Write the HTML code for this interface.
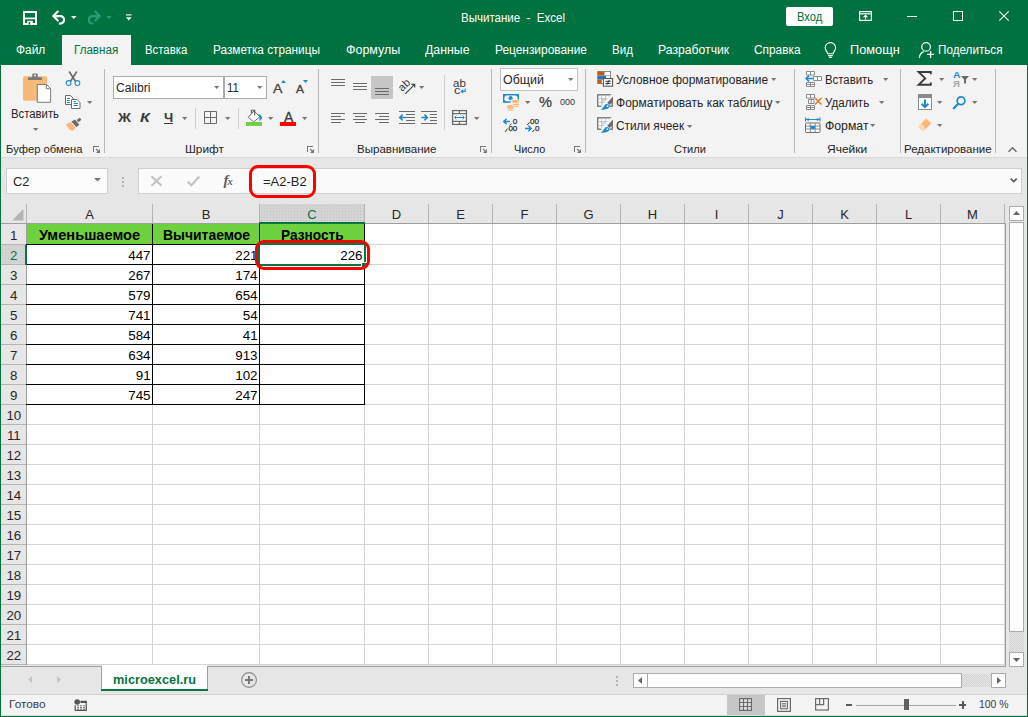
<!DOCTYPE html>
<html><head><meta charset="utf-8"><title>Excel</title>
<style>
*{box-sizing:border-box;margin:0;padding:0}
html,body{width:1028px;height:717px;overflow:hidden;background:#e6e6e6;font-family:"Liberation Sans",sans-serif;font-size:12px;color:#262626}
#win{position:absolute;left:0;top:0;width:1028px;height:717px;overflow:hidden;background:#e6e6e6}
.t{position:absolute;white-space:pre;line-height:1}
svg{position:absolute;overflow:visible}
</style></head><body><div id="win">

<div style="position:absolute;left:0px;top:0px;width:1028px;height:65px;background:#00723f;"></div>
<div style="position:absolute;left:62px;top:35px;width:69px;height:31px;background:#f3f3f3;"></div>
<div style="position:absolute;left:1px;top:65px;width:1026px;height:92px;background:#f3f3f3;"></div>
<div style="position:absolute;left:1px;top:157px;width:1026px;height:1px;background:#dadada;"></div>
<svg style="left:23px;top:11px" width="14" height="14" viewBox="0 0 14 14"><rect x="1" y="1" width="12" height="12" fill="none" stroke="#fff" stroke-width="2"/><path d="M1 7.4H13" stroke="#fff" stroke-width="1.7"/><rect x="4.2" y="9.8" width="5.6" height="3.4" fill="#fff"/><rect x="5.7" y="11" width="1.5" height="2.6" fill="#00723f"/></svg>
<svg style="left:51px;top:10px" width="16" height="15" viewBox="0 0 16 15"><path d="M6.8 1.6L2.2 6.1L6.8 10.6 M2.6 6.1H9.3C14.2 6.1 14.6 13 8.8 13.6" fill="none" stroke="#fff" stroke-width="2.1" stroke-linecap="round" stroke-linejoin="round"/></svg>
<svg style="left:71px;top:16px" width="6" height="4" viewBox="0 0 6 4"><path d="M0 0H5.6L2.8 3Z" fill="#fff"/></svg>
<svg style="left:86px;top:10px" width="16" height="15" viewBox="0 0 16 15"><path d="M9.2 1.6L13.8 6.1L9.2 10.6 M13.4 6.1H6.7C1.8 6.1 1.4 13 6.4 13.6" fill="none" stroke="#2a9b75" stroke-width="2.1" stroke-linecap="round" stroke-linejoin="round"/></svg>
<svg style="left:106px;top:16px" width="6" height="4" viewBox="0 0 6 4"><path d="M0 0H5.6L2.8 3Z" fill="#2a9b75"/></svg>
<svg style="left:126px;top:14px" width="6" height="8" viewBox="0 0 6 8"><path d="M0 0.9H5.6" stroke="#fff" stroke-width="1.1"/><path d="M0 3.2H5.6L2.8 6.4Z" fill="#fff"/></svg>
<div class="t" style="left:461.1px;top:12px;font-size:12px;color:#fff;transform:scaleX(0.9603);transform-origin:0 0;">Вычитание  -  Excel</div>
<div style="position:absolute;left:786px;top:7px;width:47px;height:19px;background:#fdfdfd;border-radius:2px"></div>
<div class="t" style="left:797.1px;top:11px;font-size:12px;color:#00723f;transform:scaleX(0.9320);transform-origin:0 0;">Вход</div>
<svg style="left:859px;top:11px" width="13" height="10" viewBox="0 0 13 10"><rect x="0.6" y="0.6" width="11.8" height="8.8" fill="none" stroke="#fff" stroke-width="1.2"/><path d="M0.6 2.8H12.4" stroke="#fff" stroke-width="1.2"/><path d="M6.5 8.5V4.5 M4.5 6.3L6.5 4.3L8.5 6.3" fill="none" stroke="#fff" stroke-width="1.1"/></svg>
<div style="position:absolute;left:907px;top:16px;width:10px;height:1px;background:#fff;"></div>
<div style="position:absolute;left:953px;top:11px;width:10px;height:10px;border:1px solid #fff"></div>
<svg style="left:999px;top:11px" width="10" height="10" viewBox="0 0 10 10"><path d="M0.3 0.3L9.7 9.7 M9.7 0.3L0.3 9.7" stroke="#fff" stroke-width="1.1"/></svg>
<div class="t" style="left:15.6px;top:44px;font-size:12px;color:#fff;transform:scaleX(0.9898);transform-origin:0 0;">Файл</div>
<div class="t" style="left:73.5px;top:44px;font-size:12px;color:#00723f;transform:scaleX(0.9677);transform-origin:0 0;">Главная</div>
<div class="t" style="left:144.6px;top:44px;font-size:12px;color:#fff;transform:scaleX(0.9461);transform-origin:0 0;">Вставка</div>
<div class="t" style="left:212.9px;top:44px;font-size:12px;color:#fff;transform:scaleX(0.9820);transform-origin:0 0;">Разметка страницы</div>
<div class="t" style="left:345.6px;top:44px;font-size:12px;color:#fff;transform:scaleX(1.0379);transform-origin:0 0;">Формулы</div>
<div class="t" style="left:425.2px;top:44px;font-size:12px;color:#fff;transform:scaleX(1.0264);transform-origin:0 0;">Данные</div>
<div class="t" style="left:494.6px;top:44px;font-size:12px;color:#fff;transform:scaleX(0.9918);transform-origin:0 0;">Рецензирование</div>
<div class="t" style="left:611.8px;top:44px;font-size:12px;color:#fff;transform:scaleX(0.9627);transform-origin:0 0;">Вид</div>
<div class="t" style="left:657.5px;top:44px;font-size:12px;color:#fff;transform:scaleX(1.0174);transform-origin:0 0;">Разработчик</div>
<div class="t" style="left:753.5px;top:44px;font-size:12px;color:#fff;transform:scaleX(0.9878);transform-origin:0 0;">Справка</div>
<div class="t" style="left:849.9px;top:44px;font-size:12px;color:#fff;transform:scaleX(1.0659);transform-origin:0 0;">Помощн</div>
<div class="t" style="left:938.1px;top:44px;font-size:12px;color:#fff;transform:scaleX(0.9734);transform-origin:0 0;">Поделиться</div>
<svg style="left:0;top:0" width="1028" height="717" viewBox="0 0 1028 717"><path d="M827.7 53.7C827.7 51.8 825.2 50.7 825.2 47.8A5.2 5.2 0 0 1 835.6 47.8C835.6 50.7 833.1 51.8 833.1 53.7Z" fill="none" stroke="#fff" stroke-width="1.15"/><path d="M828 55.6H832.8 M829 57.4H831.8" stroke="#fff" stroke-width="1.1"/><circle cx="926.1" cy="46.9" r="4.3" fill="none" stroke="#fff" stroke-width="1.2"/><path d="M919.3 57.9C919.6 54.4 921.4 52.5 923.7 51.6" fill="none" stroke="#fff" stroke-width="1.2"/><path d="M930.6 51V57.9 M927.1 54.45H934.1" stroke="#fff" stroke-width="1.3"/></svg>
<div style="position:absolute;left:0px;top:0px;width:1px;height:717px;background:#00723f;"></div>
<div style="position:absolute;left:1027px;top:0px;width:1px;height:717px;background:#00723f;"></div>
<div style="position:absolute;left:0px;top:716px;width:1028px;height:1px;background:#00723f;"></div>
<div style="position:absolute;left:104px;top:69px;width:1px;height:84px;background:#b9b9b9;"></div>
<div style="position:absolute;left:318px;top:69px;width:1px;height:84px;background:#b9b9b9;"></div>
<div style="position:absolute;left:491px;top:69px;width:1px;height:84px;background:#b9b9b9;"></div>
<div style="position:absolute;left:585px;top:69px;width:1px;height:84px;background:#b9b9b9;"></div>
<div style="position:absolute;left:794px;top:69px;width:1px;height:84px;background:#b9b9b9;"></div>
<div style="position:absolute;left:900px;top:69px;width:1px;height:84px;background:#b9b9b9;"></div>
<div style="position:absolute;left:995px;top:69px;width:1px;height:84px;background:#b9b9b9;"></div>
<div class="t" style="left:6.0px;top:144px;font-size:11.5px;color:#262626;transform:scaleX(0.9777);transform-origin:0 0;">Буфер обмена</div>
<div class="t" style="left:184.6px;top:144px;font-size:11.5px;color:#262626;transform:scaleX(1.0281);transform-origin:0 0;">Шрифт</div>
<div class="t" style="left:357.2px;top:144px;font-size:11.5px;color:#262626;transform:scaleX(1.0043);transform-origin:0 0;">Выравнивание</div>
<div class="t" style="left:514.3px;top:144px;font-size:11.5px;color:#262626;transform:scaleX(0.9464);transform-origin:0 0;">Число</div>
<div class="t" style="left:674.0px;top:144px;font-size:11.5px;color:#262626;transform:scaleX(0.9629);transform-origin:0 0;">Стили</div>
<div class="t" style="left:826.5px;top:144px;font-size:11.5px;color:#262626;transform:scaleX(1.0448);transform-origin:0 0;">Ячейки</div>
<div class="t" style="left:904.1px;top:144px;font-size:11.5px;color:#262626;transform:scaleX(1.0011);transform-origin:0 0;">Редактирование</div>
<svg style="left:93px;top:146px" width="7" height="7" viewBox="0 0 7 7"><path d="M0 0H6V1H1V6H0Z" fill="#777"/><path d="M7 3V7H3Z" fill="#777"/><path d="M3 3L5.5 5.5" stroke="#777" stroke-width="1.1"/></svg>
<svg style="left:307px;top:146px" width="7" height="7" viewBox="0 0 7 7"><path d="M0 0H6V1H1V6H0Z" fill="#777"/><path d="M7 3V7H3Z" fill="#777"/><path d="M3 3L5.5 5.5" stroke="#777" stroke-width="1.1"/></svg>
<svg style="left:480px;top:146px" width="7" height="7" viewBox="0 0 7 7"><path d="M0 0H6V1H1V6H0Z" fill="#777"/><path d="M7 3V7H3Z" fill="#777"/><path d="M3 3L5.5 5.5" stroke="#777" stroke-width="1.1"/></svg>
<svg style="left:574px;top:146px" width="7" height="7" viewBox="0 0 7 7"><path d="M0 0H6V1H1V6H0Z" fill="#777"/><path d="M7 3V7H3Z" fill="#777"/><path d="M3 3L5.5 5.5" stroke="#777" stroke-width="1.1"/></svg>
<svg style="left:1008px;top:147px" width="9" height="5" viewBox="0 0 9 5"><path d="M0.5 4.8L4.5 0.8L8.5 4.8" fill="none" stroke="#6b6b6b" stroke-width="1.5"/></svg>
<svg style="left:23px;top:73px" width="29" height="30" viewBox="0 0 29 30"><rect x="0" y="3.3" width="24" height="24.5" rx="1.5" fill="#f8b878"/>
<path d="M5 7V4.2H9.2V1.8A1.2 1.2 0 0 1 10.4 0.6H13.6A1.2 1.2 0 0 1 14.8 1.8V4.2H19V7Z" fill="#7a7a7a"/><circle cx="12" cy="2.6" r="1" fill="#f3f3f3"/>
<path d="M14.3 11.5H23.5L27.6 15.6V29.3H14.3Z" fill="#fff" stroke="#7a7a7a" stroke-width="1"/><path d="M23.3 11.7V15.8H27.4" fill="none" stroke="#7a7a7a" stroke-width="1"/></svg>
<div class="t" style="left:11.0px;top:108px;font-size:12px;color:#262626;transform:scaleX(0.9436);transform-origin:0 0;">Вставить</div>
<svg style="left:33px;top:128.3px" width="6" height="3" viewBox="0 0 6 3"><path d="M0 0H5.4L2.7 3Z" fill="#777"/></svg>
<svg style="left:65px;top:71px" width="16" height="15" viewBox="0 0 16 15"><path d="M4.2 0.5L10.6 10.5 M11.8 0.5L5.4 10.5" stroke="#6b6b6b" stroke-width="1.6" fill="none"/>
<circle cx="3.6" cy="12" r="2.4" fill="none" stroke="#1e8bcd" stroke-width="1.05"/><circle cx="12.4" cy="12" r="2.4" fill="none" stroke="#1e8bcd" stroke-width="1.05"/></svg>
<svg style="left:65px;top:95px" width="16" height="14" viewBox="0 0 16 14"><path d="M0.5 0.5H5.5L8 3V9.5H0.5Z" fill="#fff" stroke="#6b6b6b"/><path d="M2 3.5H5 M2 5.5H5 M2 7.5H5" stroke="#1e8bcd" stroke-width="1"/>
<path d="M6.5 4.5H12L15 7.5V13.5H6.5Z" fill="#fff" stroke="#6b6b6b"/><path d="M8.5 8.5H13 M8.5 10.5H13" stroke="#1e8bcd" stroke-width="1"/><path d="M8.5 6.5H11" stroke="#1e8bcd" stroke-width="1"/></svg>
<svg style="left:87px;top:101.2px" width="6" height="3" viewBox="0 0 6 3"><path d="M0 0H5.4L2.7 3Z" fill="#777"/></svg>
<svg style="left:0;top:0" width="1028" height="717" viewBox="0 0 1028 717"><path d="M65.8 124.5L70.8 122L75.6 128L72.8 131L69.4 129.8Z" fill="#f8b878"/><path d="M71.4 121.6L75 119.6L79.3 124.8L76.4 127.2Z" fill="#6b6b6b"/><path d="M76.6 120L79.8 117.8L81.4 119.8L78.4 122.3Z" fill="#6b6b6b"/></svg>
<div style="position:absolute;left:113px;top:76px;width:111px;height:23px;background:#fff;border:1px solid #ababab"></div>
<div style="position:absolute;left:224px;top:76px;width:43px;height:23px;background:#fff;border:1px solid #ababab"></div>
<div class="t" style="left:116.2px;top:82px;font-size:12px;color:#262626;transform:scaleX(1.0115);transform-origin:0 0;">Calibri</div>
<div class="t" style="left:227.2px;top:82px;font-size:12px;color:#262626;transform:scaleX(0.9472);transform-origin:0 0;">11</div>
<svg style="left:214px;top:86.2px" width="6" height="3" viewBox="0 0 6 3"><path d="M0 0H5.4L2.7 3Z" fill="#777"/></svg>
<svg style="left:257px;top:86.2px" width="6" height="3" viewBox="0 0 6 3"><path d="M0 0H5.4L2.7 3Z" fill="#777"/></svg>
<div class="t" style="left:273.2px;top:82px;font-size:13.4px;color:#444;transform:scaleX(1.0517);transform-origin:0 0;-webkit-text-stroke:0.3px #444;">A</div>
<div class="t" style="left:296.1px;top:85px;font-size:10px;color:#444;transform:scaleX(1.1844);transform-origin:0 0;-webkit-text-stroke:0.3px #444;">A</div>
<svg style="left:281px;top:80px" width="5" height="3" viewBox="0 0 5 3"><path d="M0 3H5L2.5 0Z" fill="#1e8bcd"/></svg>
<svg style="left:303px;top:80px" width="5" height="3" viewBox="0 0 5 3"><path d="M0 0H5L2.5 3Z" fill="#1e8bcd"/></svg>
<div class="t" style="left:117.5px;top:112px;font-size:12px;color:#3a3a3a;font-weight:bold;transform:scaleX(1.1894);transform-origin:0 0;">Ж</div>
<div class="t" style="left:140.4px;top:112px;font-size:12px;color:#3a3a3a;font-weight:bold;font-style:italic;transform:scaleX(1.3420);transform-origin:0 0;">К</div>
<div class="t" style="left:163.6px;top:112px;font-size:12px;color:#3a3a3a;font-weight:bold;transform:scaleX(1.0911);transform-origin:0 0;">Ч</div>
<div style="position:absolute;left:163.5px;top:122.6px;width:9.5px;height:1px;background:#3a3a3a;"></div>
<svg style="left:182px;top:117.1px" width="6" height="3" viewBox="0 0 6 3"><path d="M0 0H5.4L2.7 3Z" fill="#777"/></svg>
<div style="position:absolute;left:195px;top:108px;width:1px;height:21px;background:#d0d0d0;"></div>
<svg style="left:204px;top:111px" width="13" height="13" viewBox="0 0 13 13"><path d="M0.5 0.5H12.5V12.5H0.5Z M6.5 0.5V12.5 M0.5 6.5H12.5" fill="none" stroke="#6b6b6b" stroke-width="1"/></svg>
<svg style="left:225px;top:117.1px" width="6" height="3" viewBox="0 0 6 3"><path d="M0 0H5.4L2.7 3Z" fill="#777"/></svg>
<div style="position:absolute;left:238px;top:108px;width:1px;height:21px;background:#d0d0d0;"></div>
<svg style="left:0;top:0" width="1028" height="717" viewBox="0 0 1028 717"><path d="M254 110.9L259.9 116.8L253.7 121.8L248.2 117.3Z" fill="#fff" stroke="#6b6b6b" stroke-width="1"/><path d="M251.4 113.6V110.3H254.7V115.6" fill="none" stroke="#5a5a5a" stroke-width="1.1"/><path d="M258.4 113.9C260.6 114.2 262.4 116 261.9 118C261.5 119.4 260.6 120.4 259.4 121L259.6 117.6Z" fill="#1e8bcd"/><rect x="246" y="122" width="16" height="3.9" fill="#6dcf43"/></svg>
<svg style="left:268px;top:117.1px" width="6" height="3" viewBox="0 0 6 3"><path d="M0 0H5.4L2.7 3Z" fill="#777"/></svg>
<div class="t" style="left:283.6px;top:110px;font-size:14px;color:#3b3b3b;transform:scaleX(0.9959);transform-origin:0 0;-webkit-text-stroke:0.3px #3b3b3b;">A</div>
<div style="position:absolute;left:280px;top:122px;width:16px;height:3.9px;background:#fe0000;"></div>
<svg style="left:302px;top:117.1px" width="6" height="3" viewBox="0 0 6 3"><path d="M0 0H5.4L2.7 3Z" fill="#777"/></svg>
<div style="position:absolute;left:331px;top:79px;width:14px;height:1px;background:#6b6b6b;"></div>
<div style="position:absolute;left:331px;top:82px;width:14px;height:1px;background:#6b6b6b;"></div>
<div style="position:absolute;left:331px;top:85px;width:14px;height:1px;background:#6b6b6b;"></div>
<div style="position:absolute;left:353px;top:83px;width:14px;height:1px;background:#6b6b6b;"></div>
<div style="position:absolute;left:353px;top:86px;width:14px;height:1px;background:#6b6b6b;"></div>
<div style="position:absolute;left:353px;top:89px;width:14px;height:1px;background:#6b6b6b;"></div>
<div style="position:absolute;left:371px;top:76px;width:22px;height:23px;background:#c6c6c6;"></div>
<div style="position:absolute;left:375px;top:88px;width:14px;height:1px;background:#6b6b6b;"></div>
<div style="position:absolute;left:375px;top:91px;width:14px;height:1px;background:#6b6b6b;"></div>
<div style="position:absolute;left:375px;top:94px;width:14px;height:1px;background:#6b6b6b;"></div>
<svg style="left:398px;top:79px" width="18" height="16" viewBox="0 0 18 16"><text x="0" y="0" font-family="Liberation Sans" font-size="11" fill="#3a3a3a" transform="translate(4.3,12.9) rotate(-45)">ab</text><path d="M7.2 14.8L16.2 5.8 M13.4 5.3H16.7V8.6" fill="none" stroke="#444" stroke-width="1.2"/></svg>
<svg style="left:419px;top:85.8px" width="6" height="3" viewBox="0 0 6 3"><path d="M0 0H5.4L2.7 3Z" fill="#777"/></svg>
<div style="position:absolute;left:444px;top:75px;width:1px;height:55px;background:#d0d0d0;"></div>
<div style="position:absolute;left:331px;top:113px;width:14px;height:1px;background:#6b6b6b;"></div>
<div style="position:absolute;left:331px;top:116px;width:10px;height:1px;background:#6b6b6b;"></div>
<div style="position:absolute;left:331px;top:119px;width:14px;height:1px;background:#6b6b6b;"></div>
<div style="position:absolute;left:331px;top:122px;width:10px;height:1px;background:#6b6b6b;"></div>
<div style="position:absolute;left:353px;top:113px;width:14px;height:1px;background:#6b6b6b;"></div>
<div style="position:absolute;left:355px;top:116px;width:10px;height:1px;background:#6b6b6b;"></div>
<div style="position:absolute;left:353px;top:119px;width:14px;height:1px;background:#6b6b6b;"></div>
<div style="position:absolute;left:355px;top:122px;width:10px;height:1px;background:#6b6b6b;"></div>
<div style="position:absolute;left:375px;top:113px;width:14px;height:1px;background:#6b6b6b;"></div>
<div style="position:absolute;left:379px;top:116px;width:10px;height:1px;background:#6b6b6b;"></div>
<div style="position:absolute;left:375px;top:119px;width:14px;height:1px;background:#6b6b6b;"></div>
<div style="position:absolute;left:379px;top:122px;width:10px;height:1px;background:#6b6b6b;"></div>
<div style="position:absolute;left:399px;top:111px;width:16px;height:1px;background:#6b6b6b;"></div>
<div style="position:absolute;left:406px;top:114px;width:9px;height:1px;background:#6b6b6b;"></div>
<div style="position:absolute;left:406px;top:117px;width:9px;height:1px;background:#6b6b6b;"></div>
<div style="position:absolute;left:406px;top:120px;width:9px;height:1px;background:#6b6b6b;"></div>
<div style="position:absolute;left:399px;top:123px;width:16px;height:1px;background:#6b6b6b;"></div>
<svg style="left:399px;top:114px" width="7" height="7" viewBox="0 0 7 7"><path d="M6.8 3.5H1 M3.6 0.6L0.7 3.5L3.6 6.4" fill="none" stroke="#1e8bcd" stroke-width="1.5"/></svg>
<div style="position:absolute;left:421px;top:111px;width:16px;height:1px;background:#6b6b6b;"></div>
<div style="position:absolute;left:430px;top:114px;width:7px;height:1px;background:#6b6b6b;"></div>
<div style="position:absolute;left:430px;top:117px;width:7px;height:1px;background:#6b6b6b;"></div>
<div style="position:absolute;left:430px;top:120px;width:7px;height:1px;background:#6b6b6b;"></div>
<div style="position:absolute;left:421px;top:123px;width:16px;height:1px;background:#6b6b6b;"></div>
<svg style="left:421px;top:114px" width="7" height="7" viewBox="0 0 7 7"><path d="M0.2 3.5H6 M3.4 0.6L6.3 3.5L3.4 6.4" fill="none" stroke="#1e8bcd" stroke-width="1.5"/></svg>
<div class="t" style="left:453.4px;top:78px;font-size:11px;color:#3a3a3a;transform:scaleX(1.0461);transform-origin:0 0;">ab</div>
<div class="t" style="left:453.8px;top:85px;font-size:11.5px;color:#3a3a3a;transform:scaleX(1.1304);transform-origin:0 0;">c</div>
<svg style="left:0;top:0" width="1028" height="717" viewBox="0 0 1028 717"><path d="M465.2 88.6V91.4H461.6 M463.2 89.6L461.3 91.4L463.2 93.2" fill="none" stroke="#1e8bcd" stroke-width="1.1"/><rect x="452.6" y="110.6" width="13.8" height="13.8" fill="#fff" stroke="#6b6b6b" stroke-width="1.3"/><path d="M452.6 113.6H466.4 M452.6 121.4H466.4 M459.5 110.6V113.6 M459.5 121.4V124.4" stroke="#6b6b6b" stroke-width="1.2" fill="none"/><path d="M454.8 117.5H464.2 M456.4 115.8L454.6 117.5L456.4 119.2 M462.6 115.8L464.4 117.5L462.6 119.2" fill="none" stroke="#1e8bcd" stroke-width="1"/></svg>
<svg style="left:474px;top:117px" width="6" height="3" viewBox="0 0 6 3"><path d="M0 0H5.4L2.7 3Z" fill="#777"/></svg>
<div style="position:absolute;left:500px;top:68px;width:78px;height:23px;background:#fff;border:1px solid #c2c2c2"></div>
<div class="t" style="left:503.1px;top:74px;font-size:12px;color:#262626;transform:scaleX(1.0358);transform-origin:0 0;">Общий</div>
<svg style="left:567.6px;top:78px" width="6" height="3" viewBox="0 0 6 3"><path d="M0 0H5.4L2.7 3Z" fill="#777"/></svg>
<svg style="left:0;top:0" width="1028" height="717" viewBox="0 0 1028 717"><rect x="503" y="94" width="16" height="8.8" fill="#1e8bcd"/><path d="M506 95.6H516L517.6 97V99.8L516 101.2H506L504.4 99.8V97Z" fill="#fff"/><circle cx="510.6" cy="98.2" r="2.1" fill="#1e8bcd"/>
<rect x="510.6" y="99.6" width="9.4" height="8" fill="#f3f3f3"/><rect x="506" y="104.4" width="9" height="6.4" fill="#f3f3f3"/>
<ellipse cx="515.5" cy="101.5" rx="3.8" ry="1.4" fill="#f8b878"/><path d="M513 104.4H519 M514.6 106.4H518.6" stroke="#f8b878" stroke-width="1.1"/>
<ellipse cx="510.4" cy="106.4" rx="3.6" ry="1.5" fill="#f8b878"/><path d="M507.4 108.7H513.6 M508 110.1H513" stroke="#f8b878" stroke-width="1"/></svg>
<svg style="left:525px;top:101px" width="6" height="3" viewBox="0 0 6 3"><path d="M0 0H5.4L2.7 3Z" fill="#777"/></svg>
<div class="t" style="left:539.1px;top:95px;font-size:14px;color:#3a3a3a;transform:scaleX(1.0443);transform-origin:0 0;-webkit-text-stroke:0.2px #3a3a3a;">%</div>
<div class="t" style="left:559.6px;top:98px;font-size:10px;color:#333;transform:scale(0.905,0.875);transform-origin:0 0">000</div>
<svg style="left:0;top:0" width="1028" height="717" viewBox="0 0 1028 717"><path d="M509.9 121.4H504 M506.6 118.7L503.8 121.4L506.6 124.1" fill="none" stroke="#1e8bcd" stroke-width="1.5"/>
<text x="512.7" y="123.8" font-family="Liberation Sans" font-size="8" fill="#2b2b2b" stroke="#2b2b2b" stroke-width="0.25">0</text><text x="508.4" y="131.2" font-family="Liberation Sans" font-size="8" fill="#2b2b2b" stroke="#2b2b2b" stroke-width="0.25">00</text><path d="M505.2 131.8L507.6 128.6" stroke="#2b2b2b" stroke-width="1"/><path d="M509.6 125.6L511.4 123.6" stroke="#2b2b2b" stroke-width="0.9"/>
<text x="530" y="123.8" font-family="Liberation Sans" font-size="8" fill="#2b2b2b" stroke="#2b2b2b" stroke-width="0.25">00</text><path d="M527.3 125L529.6 122.3" stroke="#2b2b2b" stroke-width="1"/>
<path d="M525 128.5H531 M528.4 125.8L531.2 128.5L528.4 131.2" fill="none" stroke="#1e8bcd" stroke-width="1.5"/>
<text x="535" y="131.2" font-family="Liberation Sans" font-size="8" fill="#2b2b2b" stroke="#2b2b2b" stroke-width="0.25">0</text><path d="M532.4 132L534.5 129.6" stroke="#2b2b2b" stroke-width="1"/></svg>
<svg style="left:0;top:0" width="1028" height="717" viewBox="0 0 1028 717"><rect x="597.7" y="71.5" width="12.8" height="12" fill="#fff" stroke="#8a8a8a"/><path d="M597.7 75.6H610.5 M597.7 79.6H610.5 M604.2 71.5V83.5" stroke="#b0b0b0" fill="none"/>
<rect x="597.7" y="71.5" width="6.4" height="3.8" fill="#c55a11"/><rect x="597.7" y="75.8" width="8.4" height="3.6" fill="#2e75b6"/><rect x="597.7" y="79.9" width="4" height="3.6" fill="#c55a11"/>
<rect x="603.4" y="78.5" width="9.2" height="7.7" fill="#fff" stroke="#5a5a5a" stroke-width="1.1"/><path d="M605.4 81.3H610.6 M605.4 83.4H610.6 M609.4 80L606.8 84.8" stroke="#222" stroke-width="0.9" fill="none"/></svg>
<div class="t" style="left:616.2px;top:74px;font-size:12px;color:#262626;transform:scaleX(0.9970);transform-origin:0 0;">Условное форматирование</div>
<svg style="left:771px;top:78px" width="6" height="3" viewBox="0 0 6 3"><path d="M0 0H5.4L2.7 3Z" fill="#777"/></svg>
<svg style="left:0;top:0" width="1028" height="717" viewBox="0 0 1028 717"><rect x="597.75" y="94.85000000000001" width="14.5" height="11.3" fill="#fff" stroke="#6b6b6b" stroke-width="1.3"/>
<rect x="601.6" y="98.60000000000001" width="7.6" height="7" fill="#d6d6d6"/>
<path d="M601.6 95.2V105.8 M605.4 95.2V105.8 M609.2 95.2V105.8 M598 98.60000000000001H612 M598 102.5H612" stroke="#c2c2c2" stroke-width="1" fill="none"/>
<path d="M614 95.4L602.6 107.60000000000001" stroke="#f3f3f3" stroke-width="5.2"/>
<path d="M613 96.60000000000001V101.8L609.7 105.10000000000001L607.3 102.8Z" fill="#6b6b6b"/>
<path d="M601 109.9L605.3 104.4C606.6 103.4 609.1 104.0 609.4 106.10000000000001C609.5 108.4 607 109.7 601 109.9Z" fill="#1e8bcd"/><circle cx="607.4" cy="106.2" r="0.9" fill="#fff"/></svg>
<div class="t" style="left:616.2px;top:97px;font-size:12px;color:#262626;transform:scaleX(1.0024);transform-origin:0 0;">Форматировать как таблицу</div>
<svg style="left:775px;top:101px" width="6" height="3" viewBox="0 0 6 3"><path d="M0 0H5.4L2.7 3Z" fill="#777"/></svg>
<svg style="left:0;top:0" width="1028" height="717" viewBox="0 0 1028 717"><rect x="597.75" y="117.85000000000001" width="14.5" height="11.3" fill="#fff" stroke="#6b6b6b" stroke-width="1.3"/>
<rect x="601.6" y="121.60000000000001" width="7.6" height="7" fill="#cfe6f0"/>
<path d="M601.6 118.2V128.8 M605.4 118.2V128.8 M609.2 118.2V128.8 M598 121.60000000000001H612 M598 125.5H612" stroke="#c2c2c2" stroke-width="1" fill="none"/>
<path d="M614 118.4L602.6 130.6" stroke="#f3f3f3" stroke-width="5.2"/>
<path d="M613 119.60000000000001V124.8L609.7 128.1L607.3 125.8Z" fill="#6b6b6b"/>
<path d="M601 132.9L605.3 127.4C606.6 126.4 609.1 127.0 609.4 129.1C609.5 131.4 607 132.7 601 132.9Z" fill="#1e8bcd"/><circle cx="607.4" cy="129.2" r="0.9" fill="#fff"/></svg>
<div class="t" style="left:616.2px;top:120px;font-size:12px;color:#262626;transform:scaleX(0.9833);transform-origin:0 0;">Стили ячеек</div>
<svg style="left:686.7px;top:124.6px" width="6" height="3" viewBox="0 0 6 3"><path d="M0 0H5.4L2.7 3Z" fill="#777"/></svg>
<svg style="left:805px;top:71px" width="17" height="16" viewBox="0 0 17 16"><path d="M1.5 0.5H9.5V4H1.5Z M5.5 0.5V4 M1.5 11.5H9.5V15.5H1.5Z M5.5 11.5V15.5 M1.5 13.5H9.5" fill="#fff" stroke="#8a8a8a"/><path d="M8.5 5.5H16.5V9.5H8.5Z M12.5 5.5V9.5" fill="#fff" stroke="#8a8a8a"/>
<path d="M8 7.5H1.2 M4 4.6L1 7.5L4 10.4" fill="none" stroke="#1e8bcd" stroke-width="1.5"/></svg>
<div class="t" style="left:824.9px;top:74px;font-size:12px;color:#262626;transform:scaleX(0.9476);transform-origin:0 0;">Вставить</div>
<svg style="left:882.6px;top:78px" width="6" height="3" viewBox="0 0 6 3"><path d="M0 0H5.4L2.7 3Z" fill="#777"/></svg>
<svg style="left:805px;top:93.5px" width="18" height="16" viewBox="0 0 18 16"><path d="M1.5 0.5H9.5V4H1.5Z M5.5 0.5V4 M1.5 11.5H9.5V15.5H1.5Z M5.5 11.5V15.5 M1.5 13.5H9.5" fill="#fff" stroke="#8a8a8a"/><path d="M3.5 5.5H9V9.5H3.5Z M6.2 5.5V9.5" fill="#fff" stroke="#8a8a8a"/>
<path d="M10 4L16.5 10.5 M16.5 4L10 10.5" fill="none" stroke="#e8761e" stroke-width="1.5"/></svg>
<div class="t" style="left:824.9px;top:97px;font-size:12px;color:#262626;transform:scaleX(0.9647);transform-origin:0 0;">Удалить</div>
<svg style="left:878.7px;top:100.6px" width="6" height="3" viewBox="0 0 6 3"><path d="M0 0H5.4L2.7 3Z" fill="#777"/></svg>
<svg style="left:805px;top:117px" width="16" height="16" viewBox="0 0 16 16"><path d="M0.5 2.5H15 M0.5 0.3V4.7 M15 0.3V4.7" stroke="#1e8bcd" stroke-width="1" fill="none"/><path d="M3.6 0.8L1.2 2.5L3.6 4.2Z M11.9 0.8L14.3 2.5L11.9 4.2Z" fill="#1e8bcd"/>
<rect x="0.5" y="6" width="14.5" height="9.5" rx="1" fill="#fff" stroke="#6b6b6b"/><path d="M0.5 9H15 M0.5 12H15 M5.3 6V15.5 M10.2 6V15.5" stroke="#8a8a8a" fill="none"/><rect x="5.3" y="9" width="4.9" height="3" fill="#1e8bcd"/></svg>
<div class="t" style="left:824.9px;top:120px;font-size:12px;color:#262626;transform:scaleX(1.0205);transform-origin:0 0;">Формат</div>
<svg style="left:870.3px;top:123.7px" width="6" height="3" viewBox="0 0 6 3"><path d="M0 0H5.4L2.7 3Z" fill="#777"/></svg>
<svg style="left:917px;top:70.5px" width="15" height="15" viewBox="0 0 15 15"><path d="M13.8 3.3V1H1.6L8.2 7.4L1.6 13.8H13.8V11.4" fill="none" stroke="#3b3b3b" stroke-width="1.9" stroke-linejoin="miter"/></svg>
<svg style="left:938.6px;top:78px" width="6" height="3" viewBox="0 0 6 3"><path d="M0 0H5.4L2.7 3Z" fill="#777"/></svg>
<div class="t" style="left:952.5px;top:70px;font-size:9.5px;color:#1e8bcd;font-weight:bold;transform:scaleX(1.0932);transform-origin:0 0;">А</div>
<div class="t" style="left:952.9px;top:79px;font-size:9.5px;color:#a6a6a6;font-weight:bold;transform:scaleX(1.0105);transform-origin:0 0;">Я</div>
<svg style="left:960.6px;top:75.8px" width="8" height="8" viewBox="0 0 8 8"><path d="M0 0H8L5 3.4V7.5H3V3.4Z" fill="#6b6b6b"/></svg>
<svg style="left:971.7px;top:78px" width="6" height="3" viewBox="0 0 6 3"><path d="M0 0H5.4L2.7 3Z" fill="#777"/></svg>
<svg style="left:918px;top:94px" width="14" height="16" viewBox="0 0 14 16"><rect x="0.5" y="0.5" width="13" height="15" fill="#fff" stroke="#8a8a8a"/><rect x="0.5" y="0.5" width="13" height="3.5" fill="#8a8a8a"/>
<path d="M7 5.6V13 M3.6 9.8L7 13.2L10.4 9.8" fill="none" stroke="#1e8bcd" stroke-width="2"/></svg>
<svg style="left:937px;top:101px" width="6" height="3" viewBox="0 0 6 3"><path d="M0 0H5.4L2.7 3Z" fill="#777"/></svg>
<svg style="left:953px;top:96px" width="13" height="13" viewBox="0 0 13 13"><circle cx="8" cy="4.8" r="3.9" fill="none" stroke="#1e8bcd" stroke-width="1.7"/><path d="M5.2 7.8L0.8 12.2" stroke="#1e8bcd" stroke-width="2.2" stroke-linecap="round"/></svg>
<svg style="left:971.7px;top:101px" width="6" height="3" viewBox="0 0 6 3"><path d="M0 0H5.4L2.7 3Z" fill="#777"/></svg>
<svg style="left:918px;top:118px" width="14" height="13" viewBox="0 0 14 13"><path d="M0.6 8.2L8.2 0.6L13.2 5.2L6.4 12.4H3.6Z" fill="#f8b878"/><path d="M0.6 8.2L3.3 5.5L8 10.7L6.4 12.4H3.6Z" fill="#fbd9b5"/></svg>
<svg style="left:937px;top:124.2px" width="6" height="3" viewBox="0 0 6 3"><path d="M0 0H5.4L2.7 3Z" fill="#777"/></svg>
<div style="position:absolute;left:6px;top:168px;width:102px;height:26px;background:#fcfcfc;border:1px solid #d0d0d0"></div>
<div class="t" style="left:12.6px;top:176px;font-size:12.5px;color:#262626;transform:scaleX(1.0263);transform-origin:0 0;">C2</div>
<svg style="left:94px;top:178.4px" width="7" height="4" viewBox="0 0 7 4"><path d="M0 0H7L3.5 3.6Z" fill="#777"/></svg>
<div style="position:absolute;left:122px;top:177px;width:2px;height:2px;background:#b4b4b4;"></div>
<div style="position:absolute;left:122px;top:181px;width:2px;height:2px;background:#b4b4b4;"></div>
<div style="position:absolute;left:122px;top:185px;width:2px;height:2px;background:#b4b4b4;"></div>
<div style="position:absolute;left:138px;top:168px;width:884px;height:26px;background:#fbfbfb;border:1px solid #d0d0d0"></div>
<svg style="left:151px;top:176px" width="11" height="10" viewBox="0 0 11 10"><path d="M0.5 0.3L10.5 9.7 M10.5 0.3L0.5 9.7" stroke="#c2c2c2" stroke-width="2"/></svg>
<svg style="left:187px;top:176px" width="13" height="10" viewBox="0 0 13 10"><path d="M0.6 5.6L4.4 9.2L12.3 0.6" fill="none" stroke="#c2c2c2" stroke-width="2.2"/></svg>
<div class="t" style="left:223.5px;top:172.5px;font-family:'Liberation Serif',serif;font-style:italic;font-size:15px;font-weight:bold;color:#5f5f5f">f<span style="font-size:10.5px;font-weight:bold;position:relative;top:0px;left:-1px">x</span></div>
<div class="t" style="left:262.9px;top:175px;font-size:13px;color:#262626;transform:scaleX(0.9994);transform-origin:0 0;">=A2-B2</div>
<div style="position:absolute;left:248.5px;top:165px;width:67px;height:33px;border:3px solid #fc0000;border-radius:9px"></div>
<svg style="left:1010px;top:178px" width="8" height="5" viewBox="0 0 8 5"><path d="M0.7 0.6L3.7 3.6L6.7 0.6" fill="none" stroke="#5a5a5a" stroke-width="1.7"/></svg>
<div style="position:absolute;left:1px;top:204px;width:1005px;height:461px;background:#fff;"></div>
<div style="position:absolute;left:1px;top:204px;width:1005px;height:19px;background:#e6e6e6;"></div>
<div style="position:absolute;left:1px;top:224px;width:25px;height:441px;background:#e6e6e6;"></div>
<div style="position:absolute;left:260px;top:204px;width:104px;height:18px;background:#d4d4d4;background-image:radial-gradient(#c4c4c4 0.6px,transparent 0.7px);background-size:3px 3px"></div>
<div style="position:absolute;left:1px;top:245px;width:24px;height:19px;background:#d4d4d4;background-image:radial-gradient(#c4c4c4 0.6px,transparent 0.7px);background-size:3px 3px"></div>
<div style="position:absolute;left:27px;top:244px;width:978px;height:1px;background:#d4d4d4;"></div>
<div style="position:absolute;left:1px;top:244px;width:25px;height:1px;background:#b4b4b4;"></div>
<div style="position:absolute;left:27px;top:264px;width:978px;height:1px;background:#d4d4d4;"></div>
<div style="position:absolute;left:1px;top:264px;width:25px;height:1px;background:#b4b4b4;"></div>
<div style="position:absolute;left:27px;top:284px;width:978px;height:1px;background:#d4d4d4;"></div>
<div style="position:absolute;left:1px;top:284px;width:25px;height:1px;background:#b4b4b4;"></div>
<div style="position:absolute;left:27px;top:304px;width:978px;height:1px;background:#d4d4d4;"></div>
<div style="position:absolute;left:1px;top:304px;width:25px;height:1px;background:#b4b4b4;"></div>
<div style="position:absolute;left:27px;top:324px;width:978px;height:1px;background:#d4d4d4;"></div>
<div style="position:absolute;left:1px;top:324px;width:25px;height:1px;background:#b4b4b4;"></div>
<div style="position:absolute;left:27px;top:344px;width:978px;height:1px;background:#d4d4d4;"></div>
<div style="position:absolute;left:1px;top:344px;width:25px;height:1px;background:#b4b4b4;"></div>
<div style="position:absolute;left:27px;top:364px;width:978px;height:1px;background:#d4d4d4;"></div>
<div style="position:absolute;left:1px;top:364px;width:25px;height:1px;background:#b4b4b4;"></div>
<div style="position:absolute;left:27px;top:384px;width:978px;height:1px;background:#d4d4d4;"></div>
<div style="position:absolute;left:1px;top:384px;width:25px;height:1px;background:#b4b4b4;"></div>
<div style="position:absolute;left:27px;top:404px;width:978px;height:1px;background:#d4d4d4;"></div>
<div style="position:absolute;left:1px;top:404px;width:25px;height:1px;background:#b4b4b4;"></div>
<div style="position:absolute;left:27px;top:424px;width:978px;height:1px;background:#d4d4d4;"></div>
<div style="position:absolute;left:1px;top:424px;width:25px;height:1px;background:#b4b4b4;"></div>
<div style="position:absolute;left:27px;top:444px;width:978px;height:1px;background:#d4d4d4;"></div>
<div style="position:absolute;left:1px;top:444px;width:25px;height:1px;background:#b4b4b4;"></div>
<div style="position:absolute;left:27px;top:464px;width:978px;height:1px;background:#d4d4d4;"></div>
<div style="position:absolute;left:1px;top:464px;width:25px;height:1px;background:#b4b4b4;"></div>
<div style="position:absolute;left:27px;top:484px;width:978px;height:1px;background:#d4d4d4;"></div>
<div style="position:absolute;left:1px;top:484px;width:25px;height:1px;background:#b4b4b4;"></div>
<div style="position:absolute;left:27px;top:504px;width:978px;height:1px;background:#d4d4d4;"></div>
<div style="position:absolute;left:1px;top:504px;width:25px;height:1px;background:#b4b4b4;"></div>
<div style="position:absolute;left:27px;top:524px;width:978px;height:1px;background:#d4d4d4;"></div>
<div style="position:absolute;left:1px;top:524px;width:25px;height:1px;background:#b4b4b4;"></div>
<div style="position:absolute;left:27px;top:544px;width:978px;height:1px;background:#d4d4d4;"></div>
<div style="position:absolute;left:1px;top:544px;width:25px;height:1px;background:#b4b4b4;"></div>
<div style="position:absolute;left:27px;top:564px;width:978px;height:1px;background:#d4d4d4;"></div>
<div style="position:absolute;left:1px;top:564px;width:25px;height:1px;background:#b4b4b4;"></div>
<div style="position:absolute;left:27px;top:584px;width:978px;height:1px;background:#d4d4d4;"></div>
<div style="position:absolute;left:1px;top:584px;width:25px;height:1px;background:#b4b4b4;"></div>
<div style="position:absolute;left:27px;top:604px;width:978px;height:1px;background:#d4d4d4;"></div>
<div style="position:absolute;left:1px;top:604px;width:25px;height:1px;background:#b4b4b4;"></div>
<div style="position:absolute;left:27px;top:624px;width:978px;height:1px;background:#d4d4d4;"></div>
<div style="position:absolute;left:1px;top:624px;width:25px;height:1px;background:#b4b4b4;"></div>
<div style="position:absolute;left:27px;top:644px;width:978px;height:1px;background:#d4d4d4;"></div>
<div style="position:absolute;left:1px;top:644px;width:25px;height:1px;background:#b4b4b4;"></div>
<div style="position:absolute;left:27px;top:664px;width:978px;height:1px;background:#d4d4d4;"></div>
<div style="position:absolute;left:1px;top:664px;width:25px;height:1px;background:#b4b4b4;"></div>
<div style="position:absolute;left:152px;top:224px;width:1px;height:441px;background:#d4d4d4;"></div>
<div style="position:absolute;left:152px;top:204px;width:1px;height:19px;background:#b4b4b4;"></div>
<div style="position:absolute;left:259px;top:224px;width:1px;height:441px;background:#d4d4d4;"></div>
<div style="position:absolute;left:259px;top:204px;width:1px;height:19px;background:#b4b4b4;"></div>
<div style="position:absolute;left:364px;top:224px;width:1px;height:441px;background:#d4d4d4;"></div>
<div style="position:absolute;left:364px;top:204px;width:1px;height:19px;background:#b4b4b4;"></div>
<div style="position:absolute;left:428px;top:224px;width:1px;height:441px;background:#d4d4d4;"></div>
<div style="position:absolute;left:428px;top:204px;width:1px;height:19px;background:#b4b4b4;"></div>
<div style="position:absolute;left:492px;top:224px;width:1px;height:441px;background:#d4d4d4;"></div>
<div style="position:absolute;left:492px;top:204px;width:1px;height:19px;background:#b4b4b4;"></div>
<div style="position:absolute;left:556px;top:224px;width:1px;height:441px;background:#d4d4d4;"></div>
<div style="position:absolute;left:556px;top:204px;width:1px;height:19px;background:#b4b4b4;"></div>
<div style="position:absolute;left:620px;top:224px;width:1px;height:441px;background:#d4d4d4;"></div>
<div style="position:absolute;left:620px;top:204px;width:1px;height:19px;background:#b4b4b4;"></div>
<div style="position:absolute;left:684px;top:224px;width:1px;height:441px;background:#d4d4d4;"></div>
<div style="position:absolute;left:684px;top:204px;width:1px;height:19px;background:#b4b4b4;"></div>
<div style="position:absolute;left:748px;top:224px;width:1px;height:441px;background:#d4d4d4;"></div>
<div style="position:absolute;left:748px;top:204px;width:1px;height:19px;background:#b4b4b4;"></div>
<div style="position:absolute;left:812px;top:224px;width:1px;height:441px;background:#d4d4d4;"></div>
<div style="position:absolute;left:812px;top:204px;width:1px;height:19px;background:#b4b4b4;"></div>
<div style="position:absolute;left:876px;top:224px;width:1px;height:441px;background:#d4d4d4;"></div>
<div style="position:absolute;left:876px;top:204px;width:1px;height:19px;background:#b4b4b4;"></div>
<div style="position:absolute;left:940px;top:224px;width:1px;height:441px;background:#d4d4d4;"></div>
<div style="position:absolute;left:940px;top:204px;width:1px;height:19px;background:#b4b4b4;"></div>
<div style="position:absolute;left:1004px;top:224px;width:1px;height:441px;background:#d4d4d4;"></div>
<div style="position:absolute;left:1004px;top:204px;width:1px;height:19px;background:#b4b4b4;"></div>
<div style="position:absolute;left:26px;top:204px;width:1px;height:19px;background:#b4b4b4;"></div>
<div style="position:absolute;left:1px;top:223px;width:1005px;height:1px;background:#9e9e9e;"></div>
<div style="position:absolute;left:26px;top:224px;width:1px;height:441px;background:#9e9e9e;"></div>
<div style="position:absolute;left:1005px;top:223px;width:1px;height:443px;background:#9e9e9e;"></div>
<div style="position:absolute;left:1004px;top:224px;width:1px;height:441px;background:#d4d4d4;"></div>
<svg style="left:11.5px;top:208.5px" width="12" height="12" viewBox="0 0 12 12"><path d="M11.5 0V11.5H0Z" fill="#b3b5b3"/></svg>
<div class="t" style="left:85.2px;top:208px;font-size:13px;color:#262626;transform:scaleX(1.0000);transform-origin:0 0;">A</div>
<div class="t" style="left:201.7px;top:208px;font-size:13px;color:#262626;transform:scaleX(1.0000);transform-origin:0 0;">B</div>
<div class="t" style="left:307.3px;top:208px;font-size:13px;color:#08743f;transform:scaleX(1.0000);transform-origin:0 0;">C</div>
<div class="t" style="left:391.8px;top:208px;font-size:13px;color:#262626;transform:scaleX(1.0000);transform-origin:0 0;">D</div>
<div class="t" style="left:456.2px;top:208px;font-size:13px;color:#262626;transform:scaleX(1.0000);transform-origin:0 0;">E</div>
<div class="t" style="left:520.5px;top:208px;font-size:13px;color:#262626;transform:scaleX(1.0000);transform-origin:0 0;">F</div>
<div class="t" style="left:583.4px;top:208px;font-size:13px;color:#262626;transform:scaleX(1.0000);transform-origin:0 0;">G</div>
<div class="t" style="left:647.8px;top:208px;font-size:13px;color:#262626;transform:scaleX(1.0000);transform-origin:0 0;">H</div>
<div class="t" style="left:714.7px;top:208px;font-size:13px;color:#262626;transform:scaleX(1.0000);transform-origin:0 0;">I</div>
<div class="t" style="left:777.2px;top:208px;font-size:13px;color:#262626;transform:scaleX(1.0000);transform-origin:0 0;">J</div>
<div class="t" style="left:840.2px;top:208px;font-size:13px;color:#262626;transform:scaleX(1.0000);transform-origin:0 0;">K</div>
<div class="t" style="left:904.9px;top:208px;font-size:13px;color:#262626;transform:scaleX(1.0000);transform-origin:0 0;">L</div>
<div class="t" style="left:967.1px;top:208px;font-size:13px;color:#262626;transform:scaleX(1.0000);transform-origin:0 0;">M</div>
<div class="t" style="left:10.1px;top:229px;font-size:13.3px;color:#262626;transform:scaleX(1.0000);transform-origin:0 0;">1</div>
<div class="t" style="left:10.1px;top:249px;font-size:13.3px;color:#08743f;transform:scaleX(1.0000);transform-origin:0 0;">2</div>
<div class="t" style="left:10.1px;top:269px;font-size:13.3px;color:#262626;transform:scaleX(1.0000);transform-origin:0 0;">3</div>
<div class="t" style="left:10.1px;top:289px;font-size:13.3px;color:#262626;transform:scaleX(1.0000);transform-origin:0 0;">4</div>
<div class="t" style="left:10.1px;top:309px;font-size:13.3px;color:#262626;transform:scaleX(1.0000);transform-origin:0 0;">5</div>
<div class="t" style="left:10.1px;top:329px;font-size:13.3px;color:#262626;transform:scaleX(1.0000);transform-origin:0 0;">6</div>
<div class="t" style="left:10.1px;top:349px;font-size:13.3px;color:#262626;transform:scaleX(1.0000);transform-origin:0 0;">7</div>
<div class="t" style="left:10.1px;top:369px;font-size:13.3px;color:#262626;transform:scaleX(1.0000);transform-origin:0 0;">8</div>
<div class="t" style="left:10.1px;top:389px;font-size:13.3px;color:#262626;transform:scaleX(1.0000);transform-origin:0 0;">9</div>
<div class="t" style="left:6.4px;top:409px;font-size:13.3px;color:#262626;transform:scaleX(1.0000);transform-origin:0 0;">10</div>
<div class="t" style="left:6.9px;top:429px;font-size:13.3px;color:#262626;transform:scaleX(1.0000);transform-origin:0 0;">11</div>
<div class="t" style="left:6.4px;top:449px;font-size:13.3px;color:#262626;transform:scaleX(1.0000);transform-origin:0 0;">12</div>
<div class="t" style="left:6.4px;top:469px;font-size:13.3px;color:#262626;transform:scaleX(1.0000);transform-origin:0 0;">13</div>
<div class="t" style="left:6.4px;top:489px;font-size:13.3px;color:#262626;transform:scaleX(1.0000);transform-origin:0 0;">14</div>
<div class="t" style="left:6.4px;top:509px;font-size:13.3px;color:#262626;transform:scaleX(1.0000);transform-origin:0 0;">15</div>
<div class="t" style="left:6.4px;top:529px;font-size:13.3px;color:#262626;transform:scaleX(1.0000);transform-origin:0 0;">16</div>
<div class="t" style="left:6.4px;top:549px;font-size:13.3px;color:#262626;transform:scaleX(1.0000);transform-origin:0 0;">17</div>
<div class="t" style="left:6.4px;top:569px;font-size:13.3px;color:#262626;transform:scaleX(1.0000);transform-origin:0 0;">18</div>
<div class="t" style="left:6.4px;top:589px;font-size:13.3px;color:#262626;transform:scaleX(1.0000);transform-origin:0 0;">19</div>
<div class="t" style="left:6.4px;top:609px;font-size:13.3px;color:#262626;transform:scaleX(1.0000);transform-origin:0 0;">20</div>
<div class="t" style="left:6.4px;top:629px;font-size:13.3px;color:#262626;transform:scaleX(1.0000);transform-origin:0 0;">21</div>
<div class="t" style="left:6.4px;top:649px;font-size:13.3px;color:#262626;transform:scaleX(1.0000);transform-origin:0 0;">22</div>
<div style="position:absolute;left:27px;top:224px;width:337px;height:20px;background:#6ed23f;"></div>
<div style="position:absolute;left:26px;top:244px;width:339px;height:1px;background:#000;"></div>
<div style="position:absolute;left:26px;top:264px;width:339px;height:1px;background:#000;"></div>
<div style="position:absolute;left:26px;top:284px;width:339px;height:1px;background:#000;"></div>
<div style="position:absolute;left:26px;top:304px;width:339px;height:1px;background:#000;"></div>
<div style="position:absolute;left:26px;top:324px;width:339px;height:1px;background:#000;"></div>
<div style="position:absolute;left:26px;top:344px;width:339px;height:1px;background:#000;"></div>
<div style="position:absolute;left:26px;top:364px;width:339px;height:1px;background:#000;"></div>
<div style="position:absolute;left:26px;top:384px;width:339px;height:1px;background:#000;"></div>
<div style="position:absolute;left:26px;top:404px;width:339px;height:1px;background:#000;"></div>
<div style="position:absolute;left:152px;top:224px;width:1px;height:181px;background:#000;"></div>
<div style="position:absolute;left:259px;top:224px;width:1px;height:181px;background:#000;"></div>
<div style="position:absolute;left:364px;top:224px;width:1px;height:181px;background:#000;"></div>
<div class="t" style="left:38.9px;top:228px;font-size:14px;color:#000;font-weight:bold;transform:scaleX(1.0446);transform-origin:0 0;">Уменьшаемое</div>
<div class="t" style="left:163.4px;top:228px;font-size:14px;color:#000;font-weight:bold;transform:scaleX(0.9948);transform-origin:0 0;">Вычитаемое</div>
<div class="t" style="left:281.4px;top:228px;font-size:14px;color:#000;font-weight:bold;transform:scaleX(0.9759);transform-origin:0 0;">Разность</div>
<div class="t" style="left:128.2px;top:249px;font-size:13.4px;color:#000;transform:scaleX(1.0000);transform-origin:0 0;">447</div>
<div class="t" style="left:235.2px;top:249px;font-size:13.4px;color:#000;transform:scaleX(1.0000);transform-origin:0 0;">221</div>
<div class="t" style="left:128.2px;top:269px;font-size:13.4px;color:#000;transform:scaleX(1.0000);transform-origin:0 0;">267</div>
<div class="t" style="left:235.2px;top:269px;font-size:13.4px;color:#000;transform:scaleX(1.0000);transform-origin:0 0;">174</div>
<div class="t" style="left:128.2px;top:289px;font-size:13.4px;color:#000;transform:scaleX(1.0000);transform-origin:0 0;">579</div>
<div class="t" style="left:235.2px;top:289px;font-size:13.4px;color:#000;transform:scaleX(1.0000);transform-origin:0 0;">654</div>
<div class="t" style="left:128.2px;top:309px;font-size:13.4px;color:#000;transform:scaleX(1.0000);transform-origin:0 0;">741</div>
<div class="t" style="left:242.7px;top:309px;font-size:13.4px;color:#000;transform:scaleX(1.0000);transform-origin:0 0;">54</div>
<div class="t" style="left:128.2px;top:329px;font-size:13.4px;color:#000;transform:scaleX(1.0000);transform-origin:0 0;">584</div>
<div class="t" style="left:242.7px;top:329px;font-size:13.4px;color:#000;transform:scaleX(1.0000);transform-origin:0 0;">41</div>
<div class="t" style="left:128.2px;top:349px;font-size:13.4px;color:#000;transform:scaleX(1.0000);transform-origin:0 0;">634</div>
<div class="t" style="left:235.2px;top:349px;font-size:13.4px;color:#000;transform:scaleX(1.0000);transform-origin:0 0;">913</div>
<div class="t" style="left:135.7px;top:369px;font-size:13.4px;color:#000;transform:scaleX(1.0000);transform-origin:0 0;">91</div>
<div class="t" style="left:235.2px;top:369px;font-size:13.4px;color:#000;transform:scaleX(1.0000);transform-origin:0 0;">102</div>
<div class="t" style="left:128.2px;top:389px;font-size:13.4px;color:#000;transform:scaleX(1.0000);transform-origin:0 0;">745</div>
<div class="t" style="left:235.2px;top:389px;font-size:13.4px;color:#000;transform:scaleX(1.0000);transform-origin:0 0;">247</div>
<div class="t" style="left:340.2px;top:249px;font-size:13.4px;color:#000;transform:scaleX(1.0000);transform-origin:0 0;">226</div>
<div style="position:absolute;left:259px;top:222px;width:106px;height:2px;background:#08743f;"></div>
<div style="position:absolute;left:25px;top:245px;width:2px;height:20px;background:#08743f;"></div>
<div style="position:absolute;left:258px;top:243px;width:108px;height:23px;border:2px solid #08743f"></div>
<div style="position:absolute;left:361px;top:262px;width:6px;height:5px;background:#fff;"></div>
<div style="position:absolute;left:362px;top:263px;width:5px;height:4px;background:#08743f;"></div>
<div style="position:absolute;left:255px;top:240px;width:115px;height:30px;border:3px solid #fc0000;border-radius:9px"></div>
<div style="position:absolute;left:1px;top:666px;width:1005px;height:1px;background:#a0a0a0;"></div>
<div style="position:absolute;left:1009px;top:206px;width:15px;height:15px;background:#fff;border:1px solid #ababab"></div>
<svg style="left:1013px;top:211px" width="7" height="4" viewBox="0 0 7 4"><path d="M0 4H7L3.5 0Z" fill="#666"/></svg>
<div style="position:absolute;left:1009px;top:222px;width:15px;height:410px;background:#fff;border:1px solid #ababab"></div>
<div style="position:absolute;left:1009px;top:632px;width:15px;height:20px;background-color:#e6e6e6;background-image:linear-gradient(45deg,#d2d2d2 25%,transparent 25%,transparent 75%,#d2d2d2 75%),linear-gradient(45deg,#d2d2d2 25%,transparent 25%,transparent 75%,#d2d2d2 75%);background-size:2px 2px;background-position:0 0,1px 1px"></div>
<div style="position:absolute;left:1009px;top:652px;width:15px;height:15px;background:#fff;border:1px solid #ababab"></div>
<svg style="left:1013px;top:658px" width="7" height="4" viewBox="0 0 7 4"><path d="M0 0H7L3.5 4Z" fill="#666"/></svg>
<div style="position:absolute;left:616px;top:675.5px;width:2px;height:2px;background:#b4b4b4;"></div>
<div style="position:absolute;left:616px;top:679.5px;width:2px;height:2px;background:#b4b4b4;"></div>
<div style="position:absolute;left:616px;top:683.5px;width:2px;height:2px;background:#b4b4b4;"></div>
<div style="position:absolute;left:633px;top:673px;width:15px;height:15px;background:#fff;border:1px solid #ababab"></div>
<svg style="left:638px;top:677px" width="4" height="7" viewBox="0 0 4 7"><path d="M4 0V7L0 3.5Z" fill="#666"/></svg>
<div style="position:absolute;left:647px;top:673px;width:315px;height:15px;background:#fff;border:1px solid #ababab"></div>
<div style="position:absolute;left:962px;top:674px;width:29px;height:13px;background-color:#e6e6e6;background-image:linear-gradient(45deg,#d2d2d2 25%,transparent 25%,transparent 75%,#d2d2d2 75%),linear-gradient(45deg,#d2d2d2 25%,transparent 25%,transparent 75%,#d2d2d2 75%);background-size:2px 2px;background-position:0 0,1px 1px"></div>
<div style="position:absolute;left:991px;top:673px;width:15px;height:15px;background:#fff;border:1px solid #ababab"></div>
<svg style="left:997px;top:677px" width="4" height="7" viewBox="0 0 4 7"><path d="M0 0V7L4 3.5Z" fill="#666"/></svg>
<div style="position:absolute;left:102px;top:665px;width:105px;height:24px;background:#fff;"></div>
<div style="position:absolute;left:101px;top:666px;width:1px;height:23px;background:#a0a0a0;"></div>
<div style="position:absolute;left:207px;top:666px;width:1px;height:23px;background:#a0a0a0;"></div>
<div style="position:absolute;left:101px;top:689px;width:107px;height:2px;background:#08743f;"></div>
<div class="t" style="left:113.2px;top:673px;font-size:13.5px;color:#08743f;font-weight:bold;transform:scaleX(0.9454);transform-origin:0 0;">microexcel.ru</div>
<svg style="left:28px;top:676px" width="4" height="7" viewBox="0 0 4 7"><path d="M4 0V7L0 3.5Z" fill="#c4c4c4"/></svg>
<svg style="left:57px;top:676px" width="4" height="7" viewBox="0 0 4 7"><path d="M0 0V7L4 3.5Z" fill="#c4c4c4"/></svg>
<svg style="left:241px;top:672px" width="16" height="16" viewBox="0 0 16 16"><circle cx="8" cy="8" r="7.4" fill="none" stroke="#8a8a8a" stroke-width="1.1"/><path d="M8 4V12 M4 8H12" stroke="#777" stroke-width="2"/></svg>
<div style="position:absolute;left:1px;top:695px;width:1026px;height:20px;background:#f3f3f3;"></div>
<div style="position:absolute;left:1px;top:694px;width:1026px;height:1px;background:#d0d0d0;"></div>
<div class="t" style="left:9.1px;top:699px;font-size:11.5px;color:#3b3b3b;transform:scaleX(1.0306);transform-origin:0 0;">Готово</div>
<svg style="left:73.5px;top:698.5px" width="13" height="12" viewBox="0 0 13 12"><circle cx="3.2" cy="3" r="2.8" fill="#555"/><path d="M6.5 2.3H12.3V11.4H1.2V6.2" fill="none" stroke="#555" stroke-width="1.2"/><path d="M6.5 3.2H12.3" stroke="#555" stroke-width="1.6"/>
<path d="M3.2 6.8H4.8 M6.2 6.8H7.8 M9.2 6.8H10.8 M3.2 8.6H4.8 M6.2 8.6H7.8 M9.2 8.6H10.8 M3.2 10.2H4.8 M6.2 10.2H7.8 M9.2 10.2H10.8" stroke="#555" stroke-width="1"/></svg>
<div style="position:absolute;left:727px;top:695px;width:38px;height:20px;background:#c6c6c6;"></div>
<svg style="left:739px;top:698px" width="13" height="13" viewBox="0 0 13 13"><rect x="0.6" y="0.6" width="11.8" height="11.8" fill="#e2e2e2" stroke="#6b6b6b" stroke-width="1.2"/><path d="M4.5 0.6V12.4 M8.5 0.6V12.4 M0.6 4.5H12.4 M0.6 8.5H12.4" stroke="#6b6b6b" stroke-width="1.2"/></svg>
<svg style="left:777px;top:697.5px" width="14" height="14" viewBox="0 0 14 14"><rect x="0.6" y="0.6" width="12.8" height="12.8" fill="none" stroke="#6b6b6b" stroke-width="1.2"/><rect x="3.6" y="3.4" width="6.8" height="7.4" fill="none" stroke="#6b6b6b" stroke-width="1.1"/><path d="M5 5.6H9 M5 7.1H9 M5 8.6H9" stroke="#6b6b6b" stroke-width="0.9"/></svg>
<svg style="left:815px;top:698px" width="14" height="13" viewBox="0 0 14 13"><rect x="0.6" y="0.6" width="12.8" height="11.4" fill="none" stroke="#6b6b6b" stroke-width="1.2"/><path d="M4.6 0.6V6.6 M8.6 0.6V6.6H0.6" fill="none" stroke="#6b6b6b" stroke-width="1.2"/></svg>
<div style="position:absolute;left:846px;top:704.3px;width:6.4px;height:1.6px;background:#5a5a5a;"></div>
<div style="position:absolute;left:856px;top:704.6px;width:100px;height:1px;background:#a6a6a6;"></div>
<div style="position:absolute;left:904.3px;top:699px;width:4.4px;height:11px;background:#5f5f5f;"></div>
<div style="position:absolute;left:959.3px;top:704.3px;width:7.2px;height:1.6px;background:#5a5a5a;"></div>
<div style="position:absolute;left:962.1px;top:701.4px;width:1.6px;height:7.4px;background:#5a5a5a;"></div>
<div class="t" style="left:978.8px;top:699px;font-size:11.5px;color:#3b3b3b;transform:scaleX(0.9047);transform-origin:0 0;">100 %</div>
<div style="position:absolute;left:1px;top:715px;width:1026px;height:1px;background:#cfe0d6;"></div>
<div style="position:absolute;left:0px;top:716px;width:1028px;height:1px;background:#00723f;"></div>
</div></body></html>
